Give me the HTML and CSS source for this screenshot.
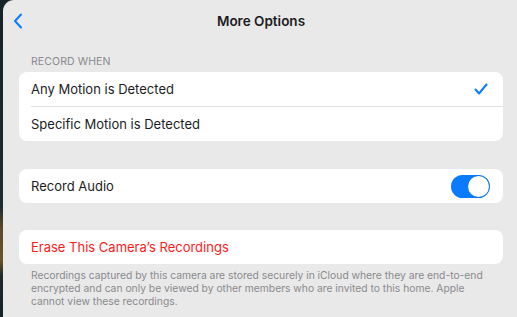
FILE: index.html
```
<!DOCTYPE html>
<html>
<head>
  <title>More Options</title>
  <link rel="stylesheet" href="styles.css">
</head>
<body>
  <div class="sheet">
    <div class="header">
      <svg class="back" width="10" height="16" viewBox="0 0 10 16">
        <polyline points="8,1.5 2,8 8,14.5" fill="none" stroke="#0a7aff" stroke-width="2" stroke-linecap="round" stroke-linejoin="round"/>
      </svg>
      <h1>More Options</h1>
    </div>

    <div class="section-label">RECORD WHEN</div>
    <div class="card">
      <div class="row">
        <span>Any Motion is Detected</span>
        <svg class="check" width="14" height="12" viewBox="0 0 14 12">
          <polyline points="1.5,6.5 5,10.5 12.5,1.5" fill="none" stroke="#0a7aff" stroke-width="2" stroke-linecap="round" stroke-linejoin="round"/>
        </svg>
      </div>
      <div class="row">
        <span>Specific Motion is Detected</span>
      </div>
    </div>

    <div class="card spaced">
      <div class="row">
        <span>Record Audio</span>
        <div class="toggle"><div class="knob"></div></div>
      </div>
    </div>

    <div class="card spaced-sm">
      <div class="row">
        <span class="danger">Erase This Camera’s Recordings</span>
      </div>
    </div>
    <p class="footer">Recordings captured by this camera are stored securely in iCloud where they are end-to-end encrypted and can only be viewed by other members who are invited to this home. Apple cannot view these recordings.</p>
  </div>
</body>
</html>
```
FILE: styles.css
```
html, body {
  margin: 0;
  height: 100%;
  overflow: hidden;
}
body {
  background: linear-gradient(to bottom, #16242a 0%, #1d2c30 65%, #5a4a2a 72%, #6b5526 82%, #1f2a2c 87%, #14232a 100%);
  font-family: Inter, "Noto Sans", sans-serif;
}
.sheet {
  margin-left: 3px;
  width: 526px;
  height: 317px;
  background-color: #e9e9e9;
  border-radius: 11px 11px 0 0;
  padding-left: 16px;
  box-sizing: border-box;
}
.header {
  height: 42px;
  position: relative;
}
.back {
  position: absolute;
  left: -6px;
  top: 13px;
}
h1 {
  margin: 0;
  width: 484px;
  text-align: center;
  font-size: 13.5px;
  font-weight: 600;
  line-height: 42px;
  color: #1c1c1e;
}
.section-label {
  margin: 13px 0 4px 12px;
  font-size: 10.5px;
  line-height: 13px;
  color: #8a8a8e;
  letter-spacing: 0.1px;
}
.card {
  width: 484px;
  background-color: #fff;
  border-radius: 8px;
  padding-left: 12px;
  box-sizing: border-box;
}
.spaced {
  margin-top: 28px;
}
.spaced-sm {
  margin-top: 27px;
}
.row {
  height: 34px;
  display: flex;
  align-items: center;
  justify-content: space-between;
  padding-right: 13px;
  font-size: 13px;
  color: #1c1c1e;
}
.row + .row {
  border-top: 1px solid #e2e2e4;
}
.check {
  margin-right: 2px;
}
.danger {
  color: #ff1a1a;
}
.toggle {
  width: 39px;
  height: 23px;
  border-radius: 12px;
  background-color: #0a7aff;
  display: flex;
  justify-content: flex-end;
  align-items: center;
  padding: 1px;
  box-sizing: border-box;
}
.knob {
  width: 21px;
  height: 21px;
  border-radius: 50%;
  background-color: #fff;
  box-shadow: 0 0 1px rgba(0, 0, 0, 0.3);
}
.footer {
  margin: 5px 0 0 12px;
  width: 460px;
  font-size: 10.3px;
  line-height: 13px;
  color: #8a8a8e;
}
```
